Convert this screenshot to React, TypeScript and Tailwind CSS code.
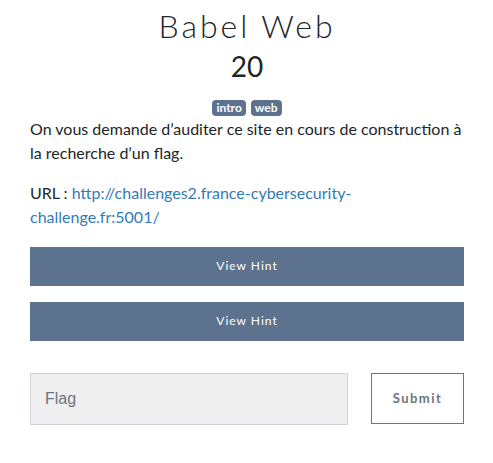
import React from 'react';

const tags = ['intro', 'web'];

export default function App() {
  return (
    <div className="min-h-screen bg-white pl-[30px] pr-[29px] font-['Lato','Liberation_Sans',sans-serif] text-[#212529]">
      <h2 className="pt-[7px] text-center text-[32px] font-light leading-[1.2] tracking-[3px]">Babel Web</h2>
      <h3 className="mt-[5px] text-center text-[28px] leading-[1.2]">20</h3>
      <div className="mt-[16px] flex justify-center gap-[5px]">
        {tags.map((tag) => (
          <span
            key={tag}
            className="rounded-[4px] bg-[#5c728f] px-[4px] text-[12px] font-bold leading-[16px] text-white"
          >
            {tag}
          </span>
        ))}
      </div>
      <p className="mt-[1px] text-base leading-6">
        On vous demande d’auditer ce site en cours de construction à la recherche d’un flag.
      </p>
      <p className="mt-[16px] text-base leading-6">
        URL :{' '}
        <a href="#" className="text-[#337ab7]">
          http://challenges2.france-cybersecurity-challenge.fr:5001/
        </a>
      </p>
      <div className="mt-[18px] flex flex-col gap-[16px]">
        <button className="h-[39px] w-full bg-[#5c728f] text-[12px] tracking-[1px] text-white">View Hint</button>
        <button className="h-[39px] w-full bg-[#5c728f] text-[12px] tracking-[1px] text-white">View Hint</button>
      </div>
      <form className="mt-[32px] flex justify-between">
        <input
          placeholder="Flag"
          className="h-[52px] w-[318px] border border-[#ced4da] bg-[#efefef] px-[14px] font-['Liberation_Sans',sans-serif] text-[16px] text-[#495057] placeholder:text-[#6c757d] outline-none"
        />
        <button
          type="button"
          className="h-[51px] w-[93px] border border-[#6c757d] bg-white text-[13px] font-bold tracking-[1.5px] text-[#6c757d]"
        >
          Submit
        </button>
      </form>
    </div>
  );
}
